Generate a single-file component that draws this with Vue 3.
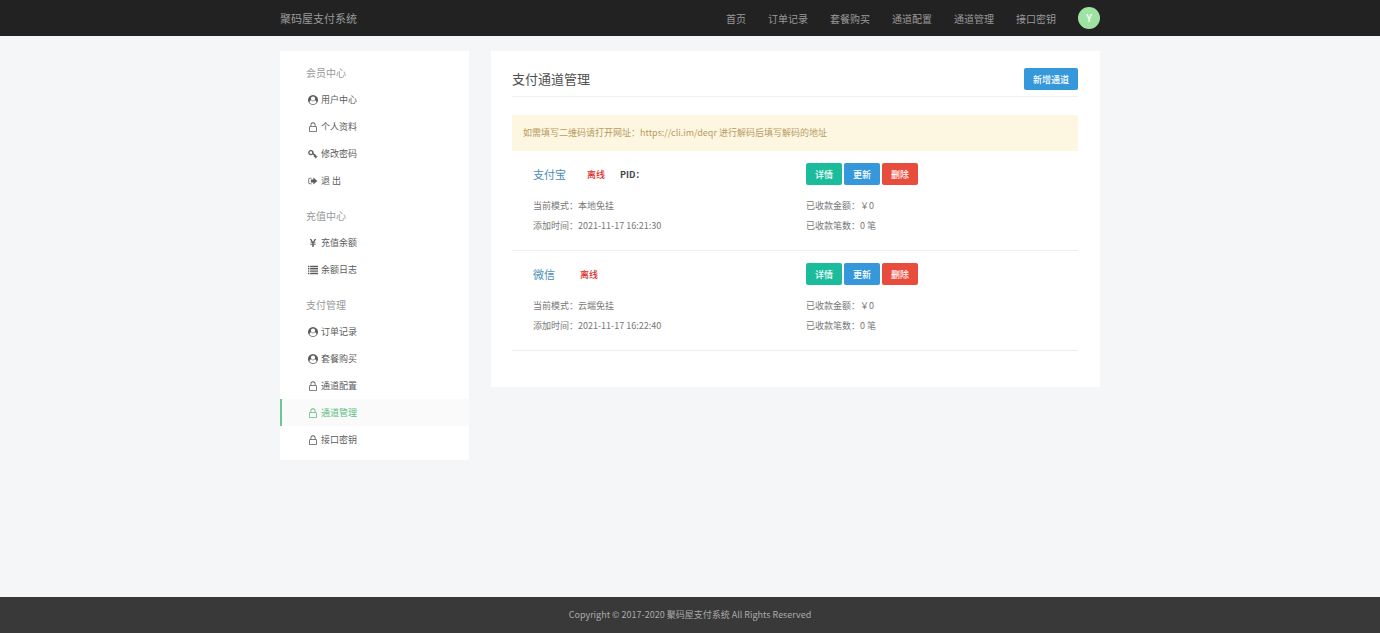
<script setup>
const icons = {
  user: {
    box: '0 0 1792 1792',
    d: 'M1523 1339q-22-155-87.500-257.500t-184.500-118.500q-67 74-159.500 115.500t-195.500 41.500-195.500-41.500-159.500-115.500q-119 16-184.500 118.500t-87.500 257.500q106 150 271 237.500t356 87.500 356-87.500 271-237.500zm-243-699q0-159-112.500-271.500t-271.500-112.500-271.500 112.500-112.500 271.500 112.500 271.500 271.500 112.500 271.500-112.500 112.500-271.500zm512 256q0 182-71 347.500t-190.500 286-285.500 191.500-349 71q-182 0-348-71t-286-191-191-286-71-348 71-348 191-286 286-191 348-71 348 71 286 191 191 286 71 348z',
  },
  lock: {
    box: '0 0 14 14',
    d: 'M3.500 6V4a3.500 3.500 0 0 1 7 0v2h.8c.7 0 1.200.5 1.200 1.200v5.600c0 .7-.5 1.200-1.200 1.200H2.700c-.7 0-1.200-.5-1.200-1.200V7.200C1.500 6.500 2 6 2.700 6zM4.600 6h4.800V4a2.400 2.400 0 0 0-4.800 0zM2.600 7.100v5.800h8.800V7.100z',
  },
  key: {
    box: '0 0 14 14',
    d: 'M4 1.500a3.700 3.700 0 1 0 2.600 6.300l2.300 2-1 1 1 1 .9-.9.7.6-.8.900 1 1 2.800-2.800-.8-.8-.9.7-.7-.6.8-.8-4-3.100A3.700 3.700 0 0 0 4 1.500zM4 3.200a1.900 1.900 0 1 1 0 3.800 1.900 1.900 0 0 1 0-3.800z',
  },
  exit: {
    box: '0 0 14 14',
    d: 'M5 2.500H3A2.500 2.500 0 0 0 .5 5v4A2.500 2.500 0 0 0 3 11.500h2v-1.100H3A1.400 1.400 0 0 1 1.600 9V5A1.400 1.400 0 0 1 3 3.600h2zM7.500 2.200v2.600H4v4.400h3.500v2.600L13 7z',
  },
  yen: {
    box: '0 0 14 14',
    d: 'M2.500 1.500h2.200L7 5.700l2.300-4.200h2.200L8.700 6.200h2v1.100H8v1.100h2.700v1.100H8v3H6v-3H3.300V8.400H6V7.300H3.300V6.200h2z',
  },
  list: {
    box: '0 0 14 14',
    d: 'M0 1h2v2H0zM3 1h11v2H3zM0 4.300h2v2H0zM3 4.300h11v2H3zM0 7.600h2v2H0zM3 7.600h11v2H3zM0 10.900h2v2H0zM3 10.900h11v2H3z',
  },
}

const nav = ['首页', '订单记录', '套餐购买', '通道配置', '通道管理', '接口密钥']

const groups = [
  {
    title: '会员中心',
    items: [
      { icon: 'user', label: '用户中心' },
      { icon: 'lock', label: '个人资料' },
      { icon: 'key', label: '修改密码' },
      { icon: 'exit', label: '退 出' },
    ],
  },
  {
    title: '充值中心',
    items: [
      { icon: 'yen', label: '充值余额' },
      { icon: 'list', label: '余额日志' },
    ],
  },
  {
    title: '支付管理',
    items: [
      { icon: 'user', label: '订单记录' },
      { icon: 'user', label: '套餐购买' },
      { icon: 'lock', label: '通道配置' },
      { icon: 'lock', label: '通道管理', active: true },
      { icon: 'lock', label: '接口密钥' },
    ],
  },
]

const channels = [
  { name: '支付宝', status: '离线', pid: 'PID：', mode: '本地免挂', time: '2021-11-17 16:21:30' },
  { name: '微信', status: '离线', mode: '云端免挂', time: '2021-11-17 16:22:40' },
]
</script>

<template>
  <div class="page">
    <header class="topbar">
      <div class="container topbar-inner">
        <a class="brand" href="#">聚码屋支付系统</a>
        <nav class="nav">
          <a v-for="item in nav" :key="item" href="#">{{ item }}</a>
          <a class="avatar" href="#">Y</a>
        </nav>
      </div>
    </header>

    <div class="container body">
      <aside class="sidebar">
        <section v-for="group in groups" :key="group.title" class="group">
          <h2>{{ group.title }}</h2>
          <ul>
            <li v-for="item in group.items" :key="item.label">
              <a href="#" :class="{ active: item.active }">
                <svg :viewBox="icons[item.icon].box" aria-hidden="true">
                  <path :d="icons[item.icon].d" fill-rule="evenodd" />
                </svg>
                <span>{{ item.label }}</span>
              </a>
            </li>
          </ul>
        </section>
      </aside>

      <main class="panel">
        <div class="panel-head">
          <h1>支付通道管理</h1>
          <button type="button" class="btn blue">新增通道</button>
        </div>
        <p class="notice">如需填写二维码请打开网址：https://cli.im/deqr 进行解码后填写解码的地址</p>
        <article v-for="channel in channels" :key="channel.name" class="channel">
          <div class="col">
            <div class="line-head">
              <a class="name" href="#">{{ channel.name }}</a>
              <span class="status">{{ channel.status }}</span>
              <strong v-if="channel.pid" class="pid">{{ channel.pid }}</strong>
            </div>
            <p>当前模式：{{ channel.mode }}</p>
            <p>添加时间：{{ channel.time }}</p>
          </div>
          <div class="col stats">
            <div class="line-head actions">
              <button type="button" class="btn green">详情</button>
              <button type="button" class="btn blue">更新</button>
              <button type="button" class="btn red">删除</button>
            </div>
            <p>已收款金额：￥0</p>
            <p>已收款笔数：0 笔</p>
          </div>
        </article>
      </main>
    </div>

    <footer class="footer">Copyright © 2017-2020 聚码屋支付系统 All Rights Reserved</footer>
  </div>
</template>

<style>
body {
  margin: 0;
  background: #f4f6f8;
}
</style>

<style scoped>
.page {
  display: flex;
  flex-direction: column;
  min-height: 100vh;
  font-family: "Noto Sans CJK SC", sans-serif;
  font-size: 9px;
  color: #777;
}

h1, h2, p, ul {
  margin: 0;
  padding: 0;
  font-weight: 400;
}

ul {
  list-style: none;
}

a {
  text-decoration: none;
  color: inherit;
}

.container {
  width: 100%;
  max-width: 820px;
  margin: 0 auto;
}

.topbar {
  background: #222;
}

.topbar-inner {
  display: flex;
  justify-content: space-between;
  align-items: center;
  height: 36px;
  color: #999;
}

.brand {
  font-size: 11px;
}

.nav {
  display: flex;
  align-items: center;
  gap: 22px;
  font-size: 10px;
}

.avatar {
  width: 22px;
  line-height: 22px;
  border-radius: 50%;
  background: #9fe3a3;
  color: #fff;
  font-weight: 500;
  text-align: center;
}

.body {
  display: flex;
  align-items: flex-start;
  gap: 22px;
  flex: 1;
  padding: 15px 0 22px;
}

.sidebar {
  flex: 0 0 189px;
  padding-bottom: 7px;
  background: #fff;
}

.group {
  padding-top: 9px;
}

.group h2 {
  padding-left: 26px;
  font-size: 10px;
  line-height: 26px;
  color: #999;
}

.group a {
  display: flex;
  align-items: center;
  gap: 3px;
  height: 27px;
  padding-left: 26px;
  border-left: 2px solid transparent;
  color: #5c5c5c;
}

.group a.active {
  border-left-color: #6cc796;
  background: #fafafa;
  color: #5dbe80;
}

.group svg {
  width: 10px;
  height: 10px;
  fill: currentColor;
}

.panel {
  flex: 1;
  min-width: 0;
  padding: 17px 22px 36px 21px;
  box-sizing: border-box;
  background: #fff;
}

.panel-head {
  display: flex;
  justify-content: space-between;
  align-items: flex-start;
  padding-bottom: 6px;
  border-bottom: 1px solid #f0f0f0;
}

h1 {
  font-size: 13px;
  line-height: 21px;
  color: #505050;
}

.btn {
  height: 22px;
  padding: 0 9px;
  border: 0;
  border-radius: 2px;
  color: #fff;
  font: 500 9px "Noto Sans CJK SC", sans-serif;
  cursor: pointer;
}

.blue { background: #3498db; }
.green { background: #1abc9c; }
.red { background: #e74c3c; }

.notice {
  margin-top: 18px;
  padding: 0 11px;
  line-height: 36px;
  background: #fdf6e1;
  color: #b89a62;
}

.channel {
  display: flex;
  padding: 12px 0 14px;
  border-bottom: 1px solid #eee;
}

.col {
  flex: 0 0 50%;
  box-sizing: border-box;
  padding-left: 21px;
}

.stats {
  padding-left: 11px;
}

.col p {
  line-height: 20px;
}

.line-head {
  display: flex;
  align-items: center;
  height: 22px;
  margin-bottom: 11px;
}

.name {
  min-width: 26px;
  margin-right: 21px;
  font-size: 11px;
  color: #4a8db8;
}

.status {
  margin-right: 15px;
  font-weight: 500;
  color: #dd2c2c;
}

.pid {
  color: #444;
}

.actions {
  gap: 2px;
}

.footer {
  background: #393939;
  color: #aaa;
  line-height: 36px;
  text-align: center;
}
</style>
